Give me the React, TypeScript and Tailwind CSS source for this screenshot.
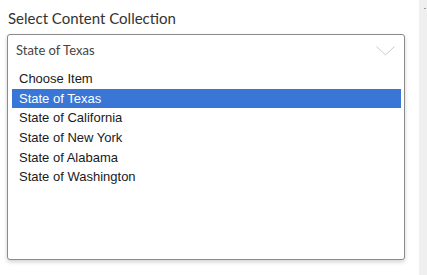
const items = [
  "Choose Item",
  "State of Texas",
  "State of California",
  "State of New York",
  "State of Alabama",
  "State of Washington",
];

function Chevron() {
  return (
    <svg width="19" height="10" viewBox="0 0 19 10" className="mt-[11px] shrink-0">
      <path d="M0.5 0.5 L9.5 9 L18.5 0.5" fill="none" stroke="#c9c9c9" strokeWidth="1" />
    </svg>
  );
}

export default function App() {
  const selected = "State of Texas";

  return (
    <div className="flex h-[275px] w-[427px] overflow-hidden bg-white">
      <div className="flex-1 pl-[7px] pt-[8px]">
        <label className="block pl-px font-['Lato',sans-serif] text-[15px] leading-[20px] text-[#333]">
          Select Content Collection
        </label>

        <div className="mt-[6px] h-[226px] w-[398px] rounded-[3px] border border-[#8a8a8a] bg-white shadow-[0_2px_4px_rgba(0,0,0,0.18)]">
          <div className="flex h-[34px] justify-between pl-2 pr-[9px]">
            <span className="pt-[7px] font-['Lato',sans-serif] text-[13px] leading-[16px] text-[#444]">
              {selected}
            </span>
            <Chevron />
          </div>

          <ul className="ml-1 w-[389px] font-['Liberation_Sans',Arial,sans-serif] text-[13px] text-[#1a1a1a]">
            {items.map((item) => (
              <li
                key={item}
                className={
                  item === selected
                    ? "h-[19.66px] bg-[#3a76d6] pl-[7px] leading-[19.66px] text-white"
                    : "h-[19.66px] pl-[7px] leading-[19.66px]"
                }
              >
                {item}
              </li>
            ))}
          </ul>
        </div>
      </div>

      <div className="relative w-2 bg-[#efefef]">
        <span className="absolute left-[5px] top-[8px] h-px w-[2px] bg-[#9a9a9a]" />
      </div>
    </div>
  );
}
